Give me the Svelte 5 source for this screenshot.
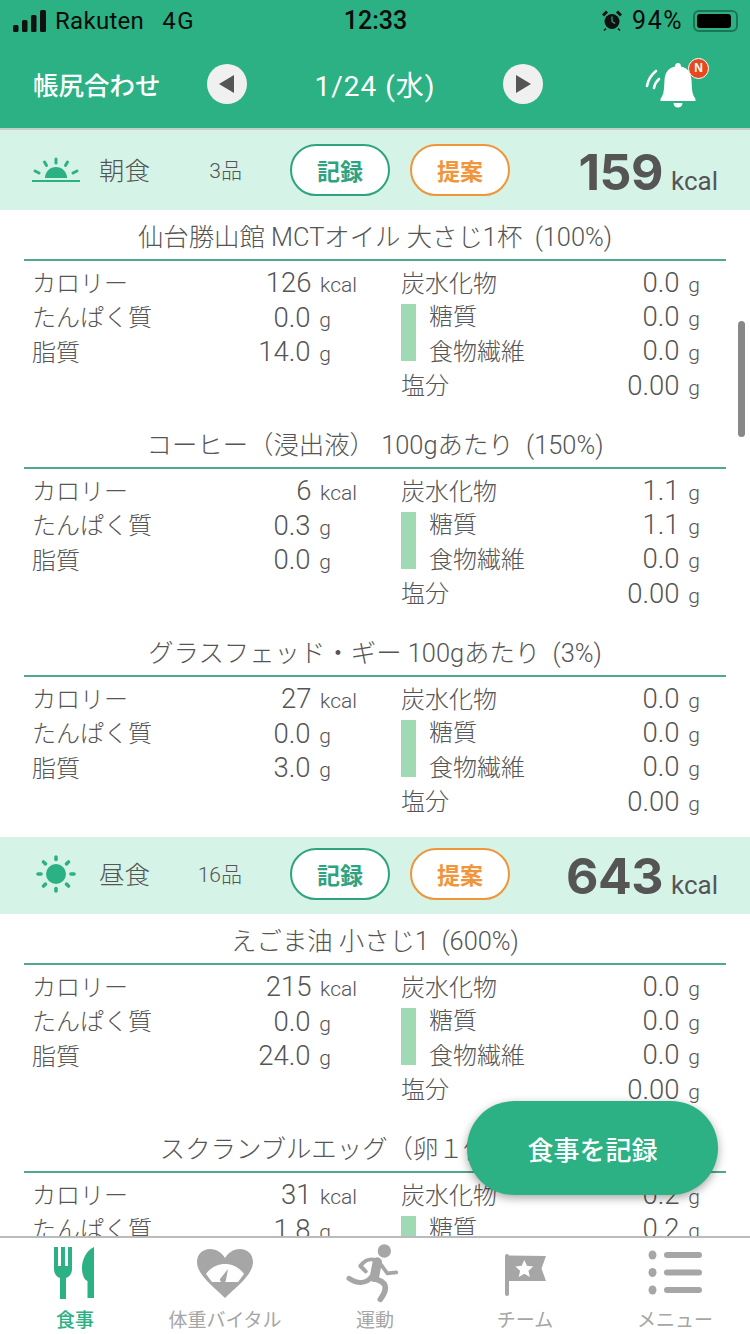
<script>
	const meals = [
		{
			name: '朝食', count: '3品', kcal: 159, icon: 'sunrise', cls: 'first',
			foods: [
				{ title: '仙台勝山館 MCTオイル 大さじ1杯\u00a0 (100%)', kcal: 126, protein: '0.0', fat: '14.0', carb: '0.0', sugar: '0.0', fiber: '0.0', salt: '0.00' },
				{ title: 'コーヒー（浸出液） 100gあたり\u00a0 (150%)', kcal: 6, protein: '0.3', fat: '0.0', carb: '1.1', sugar: '1.1', fiber: '0.0', salt: '0.00' },
				{ title: 'グラスフェッド・ギー 100gあたり\u00a0 (3%)', kcal: 27, protein: '0.0', fat: '3.0', carb: '0.0', sugar: '0.0', fiber: '0.0', salt: '0.00' }
			]
		},
		{
			name: '昼食', count: '16品', kcal: 643, icon: 'sun', cls: '',
			foods: [
				{ title: 'えごま油 小さじ1\u00a0 (600%)', kcal: 215, protein: '0.0', fat: '24.0', carb: '0.0', sugar: '0.0', fiber: '0.0', salt: '0.00' },
				{ title: 'スクランブルエッグ（卵１個）\u00a0 (50%)', kcal: 31, protein: '1.8', fat: '2.3', carb: '0.2', sugar: '0.2', fiber: '0.0', salt: '0.10' }
			]
		}
	];
</script>

<div class="page">
	<header class="top">
		<div class="status">
			<div class="status-left">
				<svg class="signal" viewBox="0 0 34 22" width="34" height="22">
					<rect x="0" y="15" width="5.5" height="7" rx="1.5" />
					<rect x="9" y="10" width="5.5" height="12" rx="1.5" />
					<rect x="18" y="5" width="5.5" height="17" rx="1.5" />
					<rect x="27" y="0" width="6" height="22" rx="1.5" />
				</svg>
				<span>Rakuten</span>
				<span class="net">4G</span>
			</div>
			<div class="clock">12:33</div>
			<div class="status-right">
				<svg viewBox="0 0 20 20" width="20" height="21">
					<circle cx="10" cy="11" r="7.5" fill="#111" />
					<path d="M1 5 5 1M19 5 15 1" stroke="#111" stroke-width="3" />
					<path d="M10 6v5l3 2" stroke="#2bb184" stroke-width="1.2" fill="none" />
					<path d="M4 18l-2 2M16 18l2 2" stroke="#111" stroke-width="1.5" />
				</svg>
				<span>94%</span>
				<div class="battery"><div class="battery-fill"></div></div>
			</div>
		</div>
		<div class="nav">
			<div class="nav-title">帳尻合わせ</div>
			<button class="arrow" aria-label="前日">
				<svg viewBox="0 0 16 18" width="16" height="18"><path d="M15 0v18L0 9z" /></svg>
			</button>
			<div class="nav-date">1/24 (水)</div>
			<button class="arrow" aria-label="翌日">
				<svg viewBox="0 0 16 18" width="16" height="18"><path d="M1 0v18l15-9z" /></svg>
			</button>
			<div class="bell">
				<svg viewBox="0 0 54 48" width="54" height="48">
					<path d="M34 3c-2 0-3 1.500-3 3.500C24 8 21 13 20.500 20 20 29 20 34 17 38c-.8 1.200-.8 3 0 3h34c.8 0 .8-1.800 0-3-3-4-3-9-3.500-18C47 13 44 8 37 6.500 37 4.500 36 3 34 3z" fill="#fff" />
					<path d="M29.500 43h9c0 6-9 6-9 0z" fill="#fff" />
					<path d="M3 26c1-6 4-11 9-15M10 28c.8-4 2.600-7 5-9" stroke="#fff" stroke-width="2.600" fill="none" stroke-linecap="round" />
				</svg>
				<span class="badge">N</span>
			</div>
		</div>
	</header>

	<main class="scroll">
		{#each meals as meal}
			<section class="meal-head {meal.cls}">
				<div class="meal-icon">
					{#if meal.icon === 'sunrise'}
						<svg viewBox="0 0 48 26" width="48" height="26">
							<path d="M13 21a11 11 0 0 1 22 0z" fill="#2bb184" />
							<rect x="0" y="23" width="48" height="2" fill="#2bb184" />
							<g stroke="#2bb184" stroke-width="3" stroke-linecap="round">
								<path d="M24 2v4M12.500 5l2 3.500M35.500 5l-2 3.500M3 14l4 2M45 14l-4 2" />
							</g>
						</svg>
					{:else}
						<svg viewBox="0 0 40 38" width="40" height="38">
							<circle cx="20" cy="19" r="10" fill="#2bb184" />
							<g stroke="#2bb184" stroke-width="3.600" stroke-linecap="round">
								<path d="M20 2v2.500M20 33.500V36M2 19h3M35 19h3M7.500 7l2 1.800M32.500 7l-2 1.800M7.500 31l2-1.800M32.500 31l-2-1.800" />
							</g>
						</svg>
					{/if}
				</div>
				<div class="meal-name">{meal.name}</div>
				<div class="meal-count">{meal.count}</div>
				<div class="pill rec">記録</div>
				<div class="pill sug">提案</div>
				<div class="meal-kcal"><b>{meal.kcal}</b> <span>kcal</span></div>
			</section>

			{#each meal.foods as food}
				<article class="food">
					<h3>{food.title}</h3>
					<div class="grid">
						<div class="col">
							<div class="row"><span class="label">カロリー</span><span class="val kc">{food.kcal} <small>kcal</small></span></div>
							<div class="row"><span class="label">たんぱく質</span><span class="val g">{food.protein} <small>g</small></span></div>
							<div class="row"><span class="label">脂質</span><span class="val g">{food.fat} <small>g</small></span></div>
						</div>
						<div class="col right">
							<div class="row"><span class="label">炭水化物</span><span class="val">{food.carb} <small>g</small></span></div>
							<div class="sub">
								<div class="row"><span class="label">糖質</span><span class="val">{food.sugar} <small>g</small></span></div>
								<div class="row"><span class="label">食物繊維</span><span class="val">{food.fiber} <small>g</small></span></div>
							</div>
							<div class="row"><span class="label">塩分</span><span class="val">{food.salt} <small>g</small></span></div>
						</div>
					</div>
				</article>
			{/each}
		{/each}
		<div class="scrollbar"></div>
		<button class="fab">食事を記録</button>
	</main>

	<nav class="tabs">
		<div class="tab active">
			<svg viewBox="0 0 44 54" width="44" height="54">
				<path d="M1 1h4v19h3V1h4v19h3V1h4v22c0 5-3 8-6 9v21H7V32c-3-1-6-4-6-9z" fill="#2bb184" />
				<path d="M41 1v51h-6.500V35c-3-1-5.500-6-5.500-13 0-9 5-18 12-21z" fill="#2bb184" />
			</svg>
			<span>食事</span>
		</div>
		<div class="tab">
			<svg viewBox="0 0 58 52" width="58" height="52">
				<path d="M29 50C18 39 1 27 1 14 1 6 7 1 14 1c7 0 12 4 15 9 3-5 8-9 15-9 7 0 13 5 13 13 0 13-17 25-28 36z" fill="#a6a6a6" />
				<path d="M10 26c5-7 12-10 19-10s14 3 19 10l-6 8H16z" fill="#fff" />
				<path d="M24 31l8-10-2 11a3 3 0 0 1-6-1z" fill="#a6a6a6" />
			</svg>
			<span>体重バイタル</span>
		</div>
		<div class="tab">
			<svg viewBox="33 6 174 174" width="58" height="58">
				<circle cx="148" cy="33" r="20" fill="#a6a6a6" />
				<g fill="none" stroke="#a6a6a6" stroke-linecap="round" stroke-linejoin="round">
					<path d="M127 66 118 112" stroke-width="28" />
					<path d="M122 60C100 54 88 62 76 78L92 94" stroke-width="12" />
					<path d="M138 74 157 100 184 97" stroke-width="11" />
					<path d="M110 110C96 130 70 134 42 115" stroke-width="15" />
					<path d="M118 116C150 124 164 140 136 178" stroke-width="17" />
				</g>
			</svg>
			<span>運動</span>
		</div>
		<div class="tab">
			<svg viewBox="0 0 42 46" width="42" height="46">
				<rect x="1" y="0" width="4" height="42" rx="2" fill="#a6a6a6" />
				<path d="M4 1.500l38 .5-4.500 12.500L42 27H4z" fill="#a6a6a6" />
				<path d="M20.300 6l2.600 5.800 6.300.7-4.700 4.200 1.300 6.200-5.500-3.200-5.500 3.200 1.300-6.200-4.700-4.200 6.300-.7z" fill="#fff" />
			</svg>
			<span>チーム</span>
		</div>
		<div class="tab">
			<svg viewBox="0 4 54 46" width="54" height="46">
				<g fill="#a6a6a6">
					<ellipse cx="4.500" cy="5" rx="4" ry="4.500" />
					<ellipse cx="4.500" cy="22.500" rx="4" ry="4.500" />
					<ellipse cx="4.500" cy="40" rx="4" ry="4.500" />
					<rect x="16" y="2" width="38" height="6" rx="3" />
					<rect x="16" y="19.500" width="38" height="6" rx="3" />
					<rect x="16" y="37" width="38" height="6" rx="3" />
				</g>
			</svg>
			<span>メニュー</span>
		</div>
	</nav>
</div>

<style>
	:global(body) {
		margin: 0;
		background: #fff;
	}

	.page {
		width: 750px;
		height: 1334px;
		display: flex;
		flex-direction: column;
		overflow: hidden;
		font-family: Roboto, "Noto Sans CJK JP", sans-serif;
		font-weight: 300;
		color: #555;
	}

	.top {
		height: 128px;
		flex-shrink: 0;
		background: #2bb184;
		border-bottom: 2px solid #c4cfca;
	}

	.status {
		height: 41px;
		padding: 0 12px 0 13px;
		display: grid;
		grid-template-columns: 1fr auto 1fr;
		align-items: center;
		color: #0b0b0b;
		font-size: 24px;
		font-weight: 400;
		font-family: Roboto, sans-serif;
	}

	.status-left {
		display: flex;
		align-items: center;
		gap: 8px;
		letter-spacing: 0.3px;
	}

	.signal rect {
		fill: #111;
	}

	.net {
		margin-left: 10px;
		letter-spacing: 1.5px;
	}

	.clock {
		font-weight: 500;
		font-size: 25px;
	}

	.status-right {
		display: flex;
		align-items: center;
		justify-content: flex-end;
		gap: 10px;
	}

	.status-right span {
		font-size: 25px;
		letter-spacing: 1.500px;
	}

	.battery {
		width: 45px;
		height: 22px;
		border: 2px solid #1d7558;
		border-radius: 6px;
		padding: 2px;
		box-sizing: border-box;
	}

	.battery-fill {
		width: 92%;
		height: 100%;
		background: #000;
		border-radius: 3px;
	}

	.nav {
		height: 87px;
		display: flex;
		align-items: center;
		padding: 0 0 0 33px;
		color: #fff;
		position: relative;
		top: -1px;
	}

	.nav-title {
		width: 174px;
		font-size: 25.500px;
		font-weight: 500;
		font-family: "Noto Sans CJK JP", sans-serif;
	}

	.arrow {
		width: 40px;
		height: 40px;
		border: none;
		border-radius: 50%;
		background: #f0f0f0;
		padding: 0;
		display: flex;
		align-items: center;
		justify-content: center;
	}

	.arrow path {
		fill: #555;
	}

	.nav-date {
		width: 256px;
		text-align: center;
		font-size: 28px;
		letter-spacing: 1px;
		font-weight: 400;
		font-family: Roboto, "Noto Sans CJK JP", sans-serif;
	}

	.bell {
		position: relative;
		margin-left: 101px;
		width: 54px;
		height: 48px;
		flex-shrink: 0;
	}

	.badge {
		position: absolute;
		top: -2px;
		right: -11px;
		width: 19px;
		height: 19px;
		border-radius: 50%;
		background: #e8481c;
		border: 1px solid #fff;
		font-size: 12px;
		line-height: 19px;
		text-align: center;
		font-weight: 700;
		font-family: "Liberation Sans", sans-serif;
	}

	.scroll {
		flex: 1;
		min-height: 0;
		overflow: hidden;
		position: relative;
	}

	.meal-head {
		height: 77px;
		margin-top: 3px;
		padding-bottom: 3px;
		box-sizing: border-box;
		display: flex;
		align-items: center;
		background: #d6f3e8;
	}

	.meal-head.first {
		height: 80px;
		margin-top: 0;
		padding-bottom: 0;
	}

	.meal-icon {
		width: 98px;
		display: flex;
		justify-content: center;
		padding-left: 14px;
		box-sizing: border-box;
	}

	.meal-name {
		width: 98px;
		padding-left: 1px;
		margin-top: -3px;
		box-sizing: border-box;
		font-size: 25.500px;
		color: #555;
		font-family: "Noto Sans CJK JP", sans-serif;
		font-weight: 300;
	}

	.meal-count {
		width: 94px;
		margin-top: -3px;
		text-align: right;
		padding-right: 48px;
		box-sizing: border-box;
		font-size: 21px;
		color: #555;
	}

	.pill {
		width: 100px;
		height: 52px;
		box-sizing: border-box;
		border-radius: 26px;
		background: #fff;
		font-size: 23px;
		font-weight: 700;
		display: flex;
		align-items: center;
		justify-content: center;
		font-family: "Noto Sans CJK JP", sans-serif;
	}

	.rec {
		border: 2px solid #2fa380;
		color: #2fa380;
	}

	.sug {
		border: 2px solid #f0953a;
		color: #f0953a;
		margin-left: 20px;
	}

	.meal-kcal {
		margin-left: auto;
		margin-top: 4px;
		padding-right: 32px;
		color: #555;
		display: flex;
		align-items: baseline;
		gap: 8px;
	}

	.meal-kcal b {
		font-size: 50px;
		font-weight: 700;
		font-family: Inter, "Liberation Sans", sans-serif;
		letter-spacing: -0.5px;
	}

	.meal-kcal span {
		font-size: 26px;
		font-weight: 400;
	}

	.food {
		height: 208px;
		margin: 0;
	}

	h3 {
		margin: 0 24px;
		height: 51px;
		box-sizing: border-box;
		border-bottom: 2px solid #4fa78c;
		text-align: center;
		font-size: 25.400px;
		line-height: 54px;
		font-weight: 300;
		white-space: nowrap;
		overflow: hidden;
		color: #555;
	}

	.grid {
		display: grid;
		grid-template-columns: 325px 299px;
		column-gap: 44px;
		padding: 3px 0 0 32px;
	}

	.row {
		height: 34.500px;
		display: flex;
		justify-content: space-between;
		align-items: center;
		font-size: 24px;
		white-space: nowrap;
	}

	.label {
		font-family: "Noto Sans CJK JP", sans-serif;
		font-weight: 300;
	}

	.val {
		font-size: 27.500px;
		padding-top: 3px;
	}

	.val small {
		font-size: 21px;
		margin-left: 2px;
	}

	.val.g {
		margin-right: 26px;
	}

	.sub {
		border-left: 15px solid #9fdab5;
		padding-left: 13px;
		height: 57px;
		margin: 5px 0 6px;
		display: flex;
		flex-direction: column;
		justify-content: center;
	}

	.sub .row {
		flex-shrink: 0;
	}

	.scrollbar {
		position: absolute;
		top: 191px;
		right: 5px;
		width: 7px;
		height: 116px;
		border-radius: 4px;
		background: #888;
	}

	.fab {
		position: absolute;
		left: 467px;
		top: 971px;
		width: 251px;
		height: 94px;
		border: none;
		border-radius: 47px;
		background: #2bb184;
		color: #fff;
		font-size: 26px;
		font-weight: 500;
		font-family: "Noto Sans CJK JP", sans-serif;
		box-shadow: 0 3px 10px rgba(0, 0, 0, 0.35);
	}

	.tabs {
		height: 98px;
		flex-shrink: 0;
		background: #fff;
		border-top: 2px solid #bbb;
		display: grid;
		grid-template-columns: repeat(5, 1fr);
		box-sizing: border-box;
	}

	.tab {
		display: flex;
		flex-direction: column;
		align-items: center;
		justify-content: flex-end;
		font-size: 19px;
		color: #a6a6a6;
		font-family: "Noto Sans CJK JP", sans-serif;
		font-weight: 400;
		gap: 5px;
		padding-bottom: 2px;
	}

	.tab svg {
		flex-shrink: 0;
		overflow: visible;
	}

	.tab.active {
		color: #2bb184;
		font-weight: 500;
	}
</style>
